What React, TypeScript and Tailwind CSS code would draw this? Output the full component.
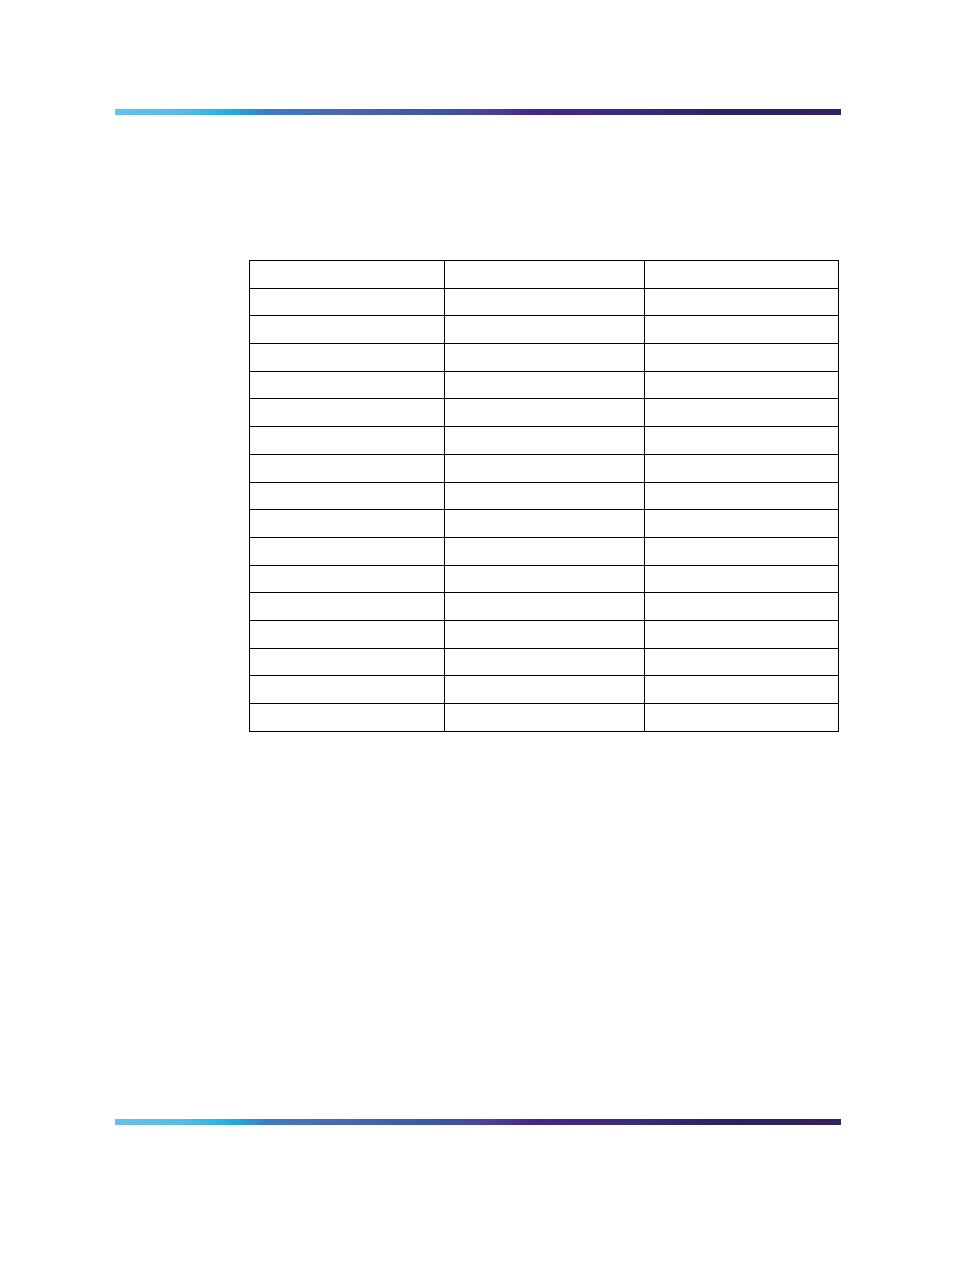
import React from "react";

const barClass =
  "h-[6px] w-[726px] ml-[115px] bg-[linear-gradient(90deg,#62c3ec_0%,#52bbe8_10%,#1eaee3_16%,#3b7cc4_21%,#4a66b0_32%,#3d56a6_44%,#4b3f9c_52%,#43258a_58%,#3a2a7a_72%,#2e2062_85%,#33225f_100%)]";

export default function App() {
  const rows = Array.from({ length: 17 });
  return (
    <div className="w-[954px] h-[1272px] bg-white pt-[109px] font-['Liberation_Sans',sans-serif]">
      <div className={barClass} />
      <div className="mt-[145px] ml-[249px] w-[590px] border-l border-t border-black grid grid-cols-[195px_200px_194px]">
        {rows.map((_, r) => (
          <React.Fragment key={r}>
            <div className="h-[27.7px] border-r border-b border-black" />
            <div className="h-[27.7px] border-r border-b border-black" />
            <div className="h-[27.7px] border-r border-b border-black" />
          </React.Fragment>
        ))}
      </div>
      <div className={"mt-[387px] " + barClass} />
    </div>
  );
}
